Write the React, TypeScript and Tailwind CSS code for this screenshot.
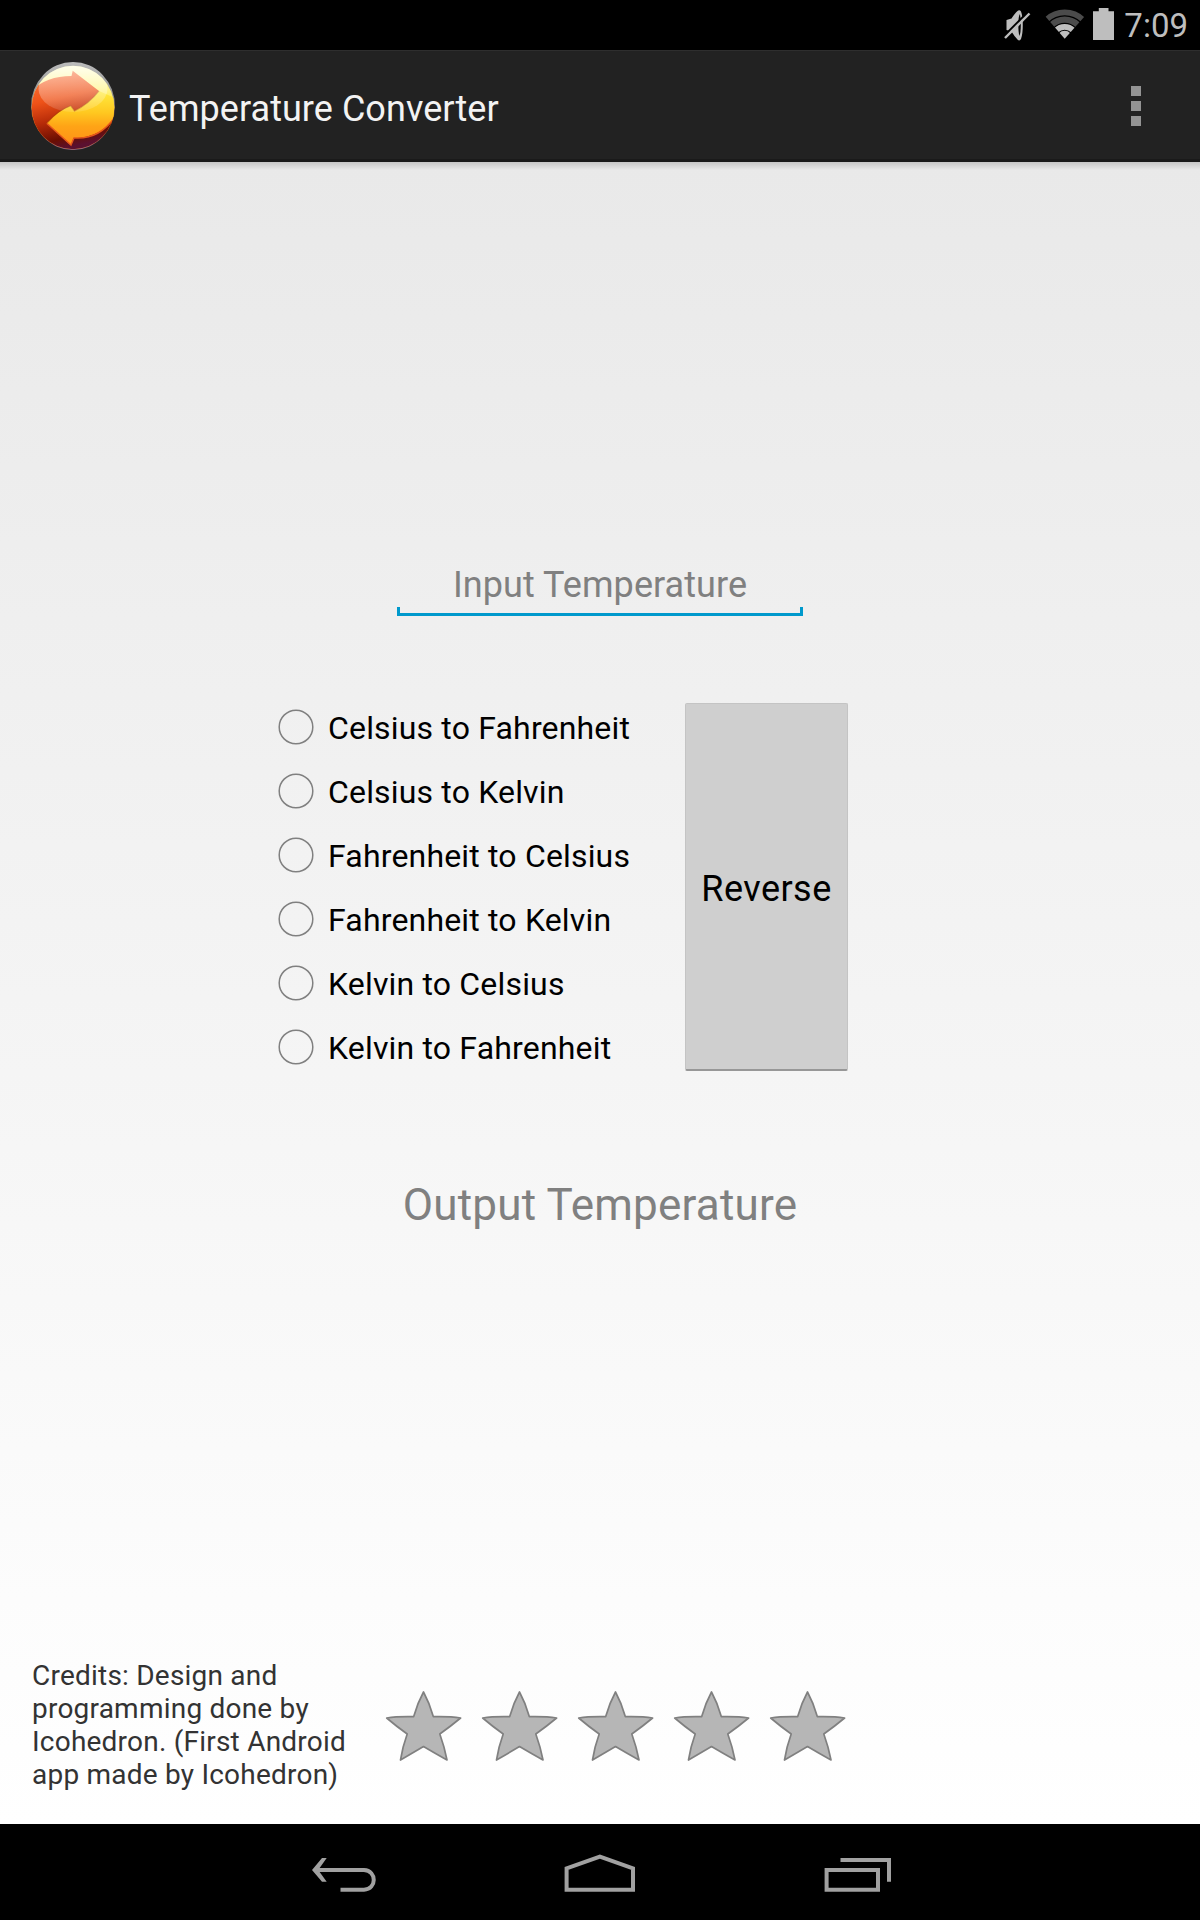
import React from "react";

const conversions = [
  "Celsius to Fahrenheit",
  "Celsius to Kelvin",
  "Fahrenheit to Celsius",
  "Fahrenheit to Kelvin",
  "Kelvin to Celsius",
  "Kelvin to Fahrenheit",
];

function StatusBar() {
  return (
    <div className="flex h-[50px] items-start justify-end bg-black pr-[12px]">
      <svg className="mt-[9px] mr-[14px] h-[33px] w-[27px]" viewBox="1005 9 27 33">
        <path d="M1007.5 20 L1012.5 18.5 Q1016 13 1018.5 11 Q1020.5 9.5 1022 11.5 Q1023.8 16 1023.8 25 Q1023.8 34 1022 39 Q1020.5 41.5 1018.5 39.5 Q1015.5 36.5 1012.5 31.5 L1007.5 30 Z" fill="#bebebe" />
        <path d="M1020.6 14 Q1019.3 17.5 1019.3 24 Q1019.3 32 1020.4 36 Q1021.8 33 1021.8 24.5 Q1021.8 16 1020.6 14Z" fill="#000" />
        <path d="M1004.5 36.5 L1029 12" stroke="#000" strokeWidth="2.2" />
        <path d="M1006 38 L1030.5 13.5" stroke="#bebebe" strokeWidth="2.4" />
      </svg>
      <svg className="mt-[9px] mr-[8px] h-[31px] w-[40px]" viewBox="1045 9 40 31">
        <clipPath id="wifiWedge">
          <path d="M1064.7 38.8 L1045 16 V9 H1085 V16 Z" />
        </clipPath>
        <g clipPath="url(#wifiWedge)" fill="none">
          <circle cx="1064.7" cy="38.8" r="26.4" stroke="#4b4b4b" strokeWidth="5.6" />
          <circle cx="1064.7" cy="38.8" r="19.2" stroke="#4b4b4b" strokeWidth="6.2" />
          <circle cx="1064.7" cy="38.8" r="12" stroke="#bebebe" strokeWidth="5.8" />
          <circle cx="1064.7" cy="38.8" r="8" fill="#bebebe" />
        </g>
      </svg>
      <svg className="mt-[8px] mr-[10px] h-[32px] w-[21px]" viewBox="0 0 21 32">
        <path d="M0 3.3H5.8V0H15.5V3.3H21V32H0Z" fill="#bebebe" />
      </svg>
      <span className="mt-[6px] text-[33px] leading-[40px] text-[#bebebe]">7:09</span>
    </div>
  );
}

function AppLogo() {
  return (
    <svg className="h-[88px] w-[84px]" viewBox="0 0 84 88">
      <defs>
        <linearGradient id="ring" x1="0" y1="0" x2="0" y2="1">
          <stop offset="0" stopColor="#bdbdbd" />
          <stop offset="0.4" stopColor="#8b8b8b" />
          <stop offset="0.7" stopColor="#7a2a1a" />
          <stop offset="1" stopColor="#9a6a8a" />
        </linearGradient>
        <linearGradient id="glow" x1="0" y1="0" x2="0" y2="1">
          <stop offset="0" stopColor="#ffffe0" />
          <stop offset="0.3" stopColor="#fff48a" />
          <stop offset="0.55" stopColor="#ffdf20" />
          <stop offset="0.7" stopColor="#ff9a10" />
        </linearGradient>
        <linearGradient id="redBody" x1="0" y1="0" x2="0.25" y2="1">
          <stop offset="0" stopColor="#ff7a40" />
          <stop offset="0.4" stopColor="#ee5218" />
          <stop offset="0.65" stopColor="#b52a08" />
          <stop offset="0.88" stopColor="#6a0e02" />
          <stop offset="1" stopColor="#5a1030" />
        </linearGradient>
        <linearGradient id="lower" x1="0.3" y1="0" x2="0.3" y2="1">
          <stop offset="0" stopColor="#ffec40" />
          <stop offset="0.4" stopColor="#ffc820" />
          <stop offset="0.65" stopColor="#ffa416" />
          <stop offset="1" stopColor="#ff9018" />
        </linearGradient>
        <linearGradient id="gloss" x1="0" y1="0" x2="0" y2="1">
          <stop offset="0" stopColor="#fff" stopOpacity="0.55" />
          <stop offset="1" stopColor="#fff" stopOpacity="0.12" />
        </linearGradient>
        <clipPath id="disc"><ellipse cx="42" cy="45.5" rx="41.3" ry="41.8" /></clipPath>
      </defs>
      <ellipse cx="42" cy="44" rx="42" ry="44" fill="url(#ring)" />
      <g clipPath="url(#disc)">
        <rect width="84" height="88" fill="url(#glow)" />
        <path d="M-2 31 Q14 14 40.5 14 L41.7 8.7 L68 29 Q58 42 43.5 49 L39.7 43.7 L15.7 61.3 L39.7 83 L42.5 76 Q70 76 84 55 V90 H-2 Z" fill="url(#redBody)" />
        <path d="M84 36 V54 Q69 75 42.3 75.5 L39.7 83 L15.7 61.3 Q28 48 39.7 43.7 L43.5 49 Q58 42 68 29 Z" fill="url(#lower)" />
        <path d="M84 55 Q68 78 43 76 L40 83 L16 61.5" fill="none" stroke="#e5561c" strokeWidth="1.4" />
        <path d="M68 29 Q58 42 43.5 49 L39.7 43.7 Q27 48 16 61" fill="none" stroke="#a84008" strokeOpacity="0.5" strokeWidth="1.2" />
        <ellipse cx="42" cy="27" rx="34.5" ry="23" fill="url(#gloss)" />
      </g>
    </svg>
  );
}

function ActionBar() {
  return (
    <header className="flex h-[112px] items-center border-t border-b-3 border-t-[#2e2e2e] border-b-[#1a1a1a] bg-[#222222] pt-[2px] pr-[59px] pl-[31px]">
      <AppLogo />
      <h1 className="mt-[5px] ml-[14px] text-[36px] leading-[40px] tracking-[0.05px] text-[#f3f3f3]">Temperature Converter</h1>
      <div className="ml-auto flex flex-col gap-[5px]">
        <i className="size-[10px] bg-[#949494]" />
        <i className="size-[10px] bg-[#949494]" />
        <i className="size-[10px] bg-[#949494]" />
      </div>
    </header>
  );
}

function Star() {
  return (
    <svg className="size-[96px]" viewBox="0 0 96 96">
      <path
        d="M47.5 16 Q53.5 27 57.3 40.6 Q74 40.2 84.6 42 Q75 50 63.8 58 Q68.5 71 71 84 Q60 78 47.5 70.6 Q35 78 24.5 84 Q26.5 71 31.2 58 Q20 50 10.7 42 Q21 40.2 37.7 40.6 Q41.500 27 47.5 16 Z"
        fill="#b6b6b6"
        stroke="#808080"
        strokeWidth="1.7"
        strokeLinejoin="round"
      />
    </svg>
  );
}

function NavBar() {
  return (
    <nav className="flex h-[96px] items-start bg-black pt-[30px] pl-[312px]">
      <svg className="h-[38px] w-[64px]" viewBox="312 1854 64 38" fill="none" stroke="#a1a1a1" strokeWidth="4">
        <path d="M316 1870 H364 C377 1870.6 377 1889.2 364 1889.8 H340.5" />
        <path d="M322 1858 H326.7 L318.2 1870 L326.7 1881.8 H322 L312 1870Z" fill="#a1a1a1" stroke="none" />
      </svg>
      <svg className="ml-[188px] h-[38px] w-[72px]" viewBox="564 1854 72 38" fill="none" stroke="#a1a1a1" strokeWidth="4">
        <path d="M566.6 1889.8 V1868.4 L599.9 1856.6 L633 1868.4 V1889.8 Z" />
      </svg>
      <svg className="ml-[188px] h-[38px] w-[68px]" viewBox="824 1854 68 38" fill="none" stroke="#a1a1a1" strokeWidth="4">
        <path d="M826.6 1870 H878 V1889.8 H826.6 Z" />
        <path d="M840.5 1860 H889 V1881.8" />
      </svg>
    </nav>
  );
}

export default function App() {
  return (
    <div className="flex h-[1920px] w-[1200px] flex-col overflow-hidden bg-black font-[Roboto,sans-serif]">
      <StatusBar />
      <ActionBar />
      <main className="flex h-[1662px] flex-col items-center bg-linear-to-b from-[#e9e9e9] to-white">
        <div className="h-[8px] w-full shrink-0 bg-linear-to-b from-black/15 to-transparent" />
        <div className="mt-[394px] flex h-[52px] w-[406px] flex-col justify-end">
          <span className="text-center text-[36px] leading-[43px] tracking-[0.06px] text-[#808080]">Input Temperature</span>
          <div className="h-[9px] border-x-3 border-b-3 border-[#0099cc]" />
        </div>
        <div className="mt-[79px] flex w-full pl-[278px]">
          <div className="flex w-[407px] flex-col">
            {conversions.map((label) => (
              <label key={label} className="flex h-[64px] shrink-0 items-center">
                <svg className="size-[36px]" viewBox="0 0 36 36">
                  <circle cx="18" cy="18" r="16.8" fill="none" stroke="#808080" strokeWidth="1.5" />
                </svg>
                <span className="mt-[2px] ml-[14px] text-[32px] leading-[40px] tracking-[0.17px] text-black">{label}</span>
              </label>
            ))}
          </div>
          <button className="mt-[8px] h-[368px] w-[163px] rounded-[2px] border border-b-2 border-[#c4c4c4] border-b-[#979797] bg-[#cfcfcf] pt-[4px] text-[36px] tracking-[0.45px] text-black">
            Reverse
          </button>
        </div>
        <div className="mt-[100px] text-[44px] leading-[52px] tracking-[0.19px] text-[#808080]">Output Temperature</div>
        <div className="mt-auto mb-[33px] flex w-full items-start pl-[32px]">
          <p className="w-[344px] text-[28px] leading-[33px] tracking-[0.22px] text-[#333333]">
            Credits: Design and
            <br />
            programming done by
            <br />
            Icohedron. (First Android
            <br />
            app made by Icohedron)
          </p>
          <div className="mt-[17px] mb-[1px] flex">
            {[1, 2, 3, 4, 5].map((n) => (
              <Star key={n} />
            ))}
          </div>
        </div>
      </main>
      <NavBar />
    </div>
  );
}
